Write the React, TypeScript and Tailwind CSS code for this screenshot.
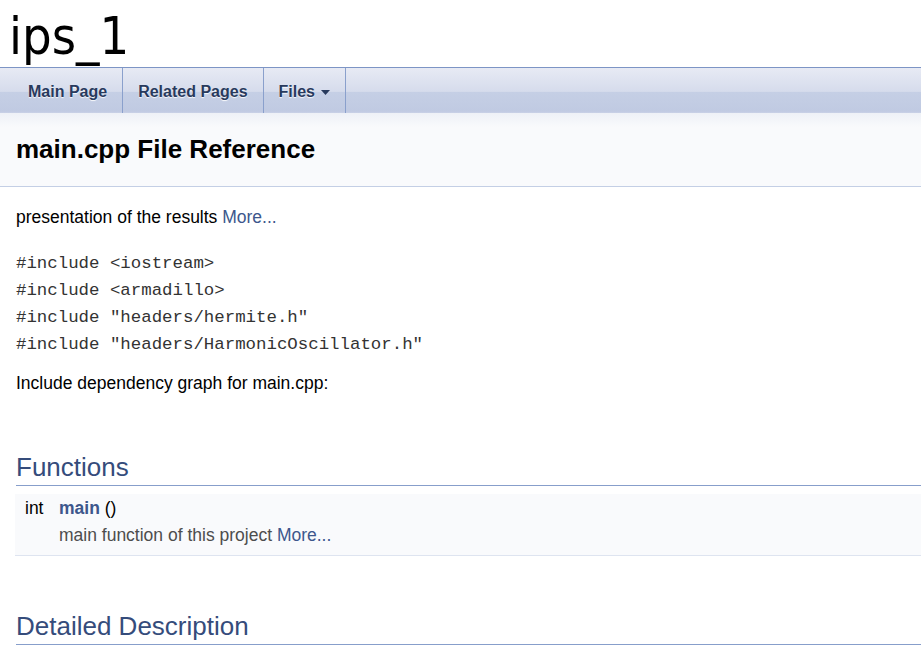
const tabs = [
  { label: "Main Page" },
  { label: "Related Pages" },
  { label: "Files", menu: true },
];

const includes = [
  "#include <iostream>",
  "#include <armadillo>",
  '#include "headers/hermite.h"',
  '#include "headers/HarmonicOscillator.h"',
];

export default function App() {
  return (
    <div className="min-h-[661px] bg-white font-['Liberation_Sans',Arial,sans-serif] text-[17.5px] text-black">
      {/* project title */}
      <div className="h-[67px] pl-[9px] pt-[5px]">
        <div className="font-['DejaVu_Sans_Condensed','Liberation_Sans',sans-serif] text-[52px] leading-[62px]">
          ips_1
        </div>
      </div>

      {/* tab bar */}
      <div className="flex h-[46px] border-t border-[#7d95c5] bg-[linear-gradient(to_bottom,#e7eaf4_0%,#d6dcec_52%,#c5cfe5_54%,#c0cae2_96%,#cad2e7_100%)] pl-[13px]">
        {tabs.map((t) => (
          <div
            key={t.label}
            className="flex items-center border-r border-[#8aa0cc] px-[15px] pt-[2px] text-[16px] font-bold text-[#283a5d] [text-shadow:0_1px_1px_rgba(255,255,255,0.9)]"
          >
            {t.label}
            {t.menu && (
              <svg width="9" height="5" viewBox="0 0 9 5" className="ml-[6px] mt-[1px]">
                <path d="M0 0h9L4.5 5z" fill="#283a5d" />
              </svg>
            )}
          </div>
        ))}
      </div>

      {/* header */}
      <div className="border-b border-[#c4cfe5] bg-[linear-gradient(to_bottom,#eef1f7_0px,#f9fafc_14px,#f9fafc_100%)] pl-[16px] pt-[21px] pb-[22px]">
        <div className="text-[26px] font-bold leading-[30px]">main.cpp File Reference</div>
      </div>

      {/* contents */}
      <div className="pl-[16px] pt-[20px]">
        <p className="leading-[20px]">
          presentation of the results <span className="text-[#3d578c]">More...</span>
        </p>

        <div className="mt-[23px] font-['Liberation_Mono','Courier_New',monospace] text-[17.4px] leading-[27px] text-[#333]">
          {includes.map((line) => (
            <div key={line}>{line}</div>
          ))}
        </div>

        <p className="mt-[15px] leading-[20px]">Include dependency graph for main.cpp:</p>

        <h2 className="mt-[59px] border-b border-[#879ecb] pb-[3px] text-[26px] leading-[30px] text-[#354c7b]">
          Functions
        </h2>

        <div className="-ml-[1px] mt-[8px] border-b border-[#dee4f0] bg-[#f9fafc] pt-[1px] pb-[6px]">
          <div className="flex leading-[27px]">
            <div className="w-[44px] pl-[10px]">int</div>
            <div>
              <span className="font-bold text-[#3d578c]">main</span> ()
            </div>
          </div>
          <div className="pl-[44px] leading-[27px] text-[#4d4d4d]">
            main function of this project <span className="text-[#3d578c]">More...</span>
          </div>
        </div>

        <h2 className="mt-[55px] border-b border-[#879ecb] pb-[3px] text-[26px] leading-[30px] text-[#354c7b]">
          Detailed Description
        </h2>
      </div>
    </div>
  );
}
